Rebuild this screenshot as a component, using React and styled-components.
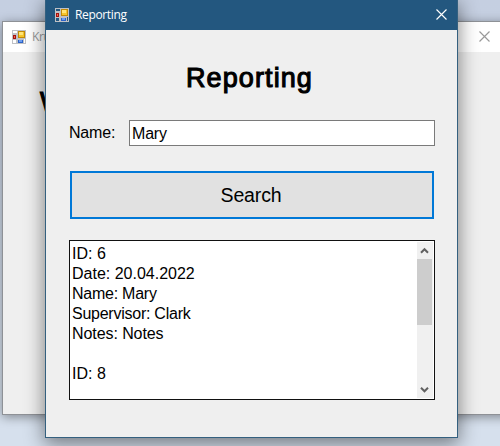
import React from "react";
import styled, { createGlobalStyle } from "styled-components";

const GlobalStyle = createGlobalStyle`
  * { box-sizing: border-box; }
  body { margin: 0; overflow: hidden; background: #d6e0ed; }
`;

const Desktop = styled.main`
  position: relative;
  width: 500px;
  height: 446px;
  overflow: hidden;
  background: linear-gradient(#c5cfe1 0, #c5d0e1 60px, #d6e0ed 380px);
  font-family: "Liberation Sans", Arial, sans-serif;
  color: #000;
`;

const Window = styled.section`
  position: absolute;
  left: ${(p) => p.$x}px;
  top: ${(p) => p.$y}px;
  width: ${(p) => p.$w}px;
  height: ${(p) => p.$h}px;
  display: flex;
  flex-direction: column;
  background: #efefef;
  border: 1px solid ${(p) => (p.$active ? "#34607f" : "#8e9196")};
  box-shadow: ${(p) =>
    p.$active
      ? "0 5px 18px 1px rgba(0,0,0,.46)"
      : "0 2px 10px rgba(0,0,0,.4)"};
`;

const TitleBar = styled.header`
  display: flex;
  flex: none;
  align-items: center;
  height: 30px;
  padding: 0 ${(p) => (p.$active ? 10 : 21)}px 0 9px;
  background: ${(p) => (p.$active ? "#23577f" : "#fff")};
  color: ${(p) => (p.$active ? "#fff" : "#999")};
`;

const Caption = styled.span`
  flex: 1;
  margin-left: 6px;
  font: 12px/16px "Open Sans", "Noto Sans", sans-serif;
  letter-spacing: -0.35px;
  white-space: nowrap;
`;

const Icon = styled.svg`
  display: block;
  flex: none;
`;

const CloseGlyph = styled(Icon)`
  margin-bottom: 1px;
`;

const Form = styled.div`
  display: flex;
  flex-direction: column;
  padding: 32px 22px 0 23px;
`;

const Heading = styled.h1`
  margin: 0;
  padding-right: 5px;
  height: 32px;
  font-size: 27px;
  line-height: 32px;
  font-weight: 400;
  text-align: center;
  letter-spacing: 1.1px;
  -webkit-text-stroke: 1.1px #000;
`;

const BackHeading = styled.h1`
  margin: 34px 0 0 37px;
  font-size: 27px;
  line-height: 32px;
  font-weight: 400;
  -webkit-text-stroke: 1.2px #000;
`;

const Field = styled.label`
  display: flex;
  height: 26px;
  margin-top: 26px;
  font-size: 16px;
  line-height: 25px;
  letter-spacing: -0.2px;
`;

const FieldName = styled.span`
  width: 60px;
`;

const Input = styled.input`
  flex: 1;
  min-width: 0;
  height: 26px;
  padding: 1px 2px 0;
  border: 1px solid #7a7a7a;
  border-radius: 0;
  outline: 0;
  background: #fff;
  color: #000;
  font: 16px "Liberation Sans", Arial, sans-serif;
  letter-spacing: -0.2px;
`;

const Button = styled.button`
  height: 48px;
  margin: 25px 1px 0;
  padding: 1px 2px 0 0;
  border: 2px solid #0078d7;
  border-radius: 0;
  background: #e1e1e1;
  color: #000;
  font: 19.5px "Liberation Sans", Arial, sans-serif;
  letter-spacing: -0.15px;
`;

const ResultBox = styled.div`
  display: flex;
  justify-content: space-between;
  height: 160px;
  margin-top: 21px;
  padding: 1px 1px 1px 2px;
  border: 1px solid #111;
  background: #fff;
`;

const Results = styled.div`
  padding-top: 2px;
  font-size: 16px;
  line-height: 20px;
`;

const Line = styled.div`
  height: 20px;
  white-space: pre;
  letter-spacing: ${(p) => p.$tracking || 0}px;
`;

const ScrollBar = styled.div`
  display: flex;
  flex-direction: column;
  width: 16px;
  background: #f0f0f0;
`;

const Thumb = styled.div`
  width: 15px;
  height: 66px;
  margin-bottom: auto;
  background: #cdcdcd;
`;

const AppIcon = () => (
  <Icon width="14" height="14" viewBox="0 0 14 14" shapeRendering="crispEdges">
    <path
      d="M0 0h14v14H0zM1 1v2h4V1zM1 10v3h3v-3zM12 9v4h1V9z"
      fill="#bfc1c5"
      fillRule="evenodd"
    />
    <path d="M1 5h3v4H1z" fill="#a5120f" />
    <path d="M2 6h1v2H2z" fill="#f06a50" />
    <path d="M6 1h7v7H6z" fill="#c48a05" />
    <path d="M7 2h5v5H7z" fill="#f5c52c" />
    <path d="M7 2h4v3H7z" fill="#ffe477" />
    <path d="M6 10h5v3H6z" fill="#2c63c9" />
    <path d="M7 10h3v2H7z" fill="#6b9df0" />
  </Icon>
);

const CloseIcon = () => (
  <CloseGlyph width="11" height="11" viewBox="0 0 11 11" fill="none" stroke="currentColor" strokeWidth="1.15">
    <path d="M.5.5l10 10M10.5.5l-10 10" />
  </CloseGlyph>
);

const Arrow = ({ down }) => (
  <Icon width="16" height="17" viewBox="0 0 16 17" fill="none" stroke="#606060" strokeWidth="2">
    <path d={down ? "M4 6.8L7.5 10.3L11 6.8" : "M4 10.7L7.5 7.2L11 10.7"} />
  </Icon>
);

const lines = [
  { text: "ID: 6" },
  { text: "Date: 20.04.2022" },
  { text: "Name: Mary", tracking: -0.25 },
  { text: "Supervisor: Clark", tracking: -0.25 },
  { text: "Notes: Notes", tracking: -0.08 },
  { text: "" },
  { text: "ID: 8" },
];

export default function App() {
  return (
    <Desktop>
      <GlobalStyle />
      <Window $x={2} $y={21} $w={510} $h={394}>
        <TitleBar>
          <AppIcon />
          <Caption>Kru</Caption>
          <CloseIcon />
        </TitleBar>
        <BackHeading>W</BackHeading>
      </Window>
      <Window $active $x={45} $y={-1} $w={413} $h={439}>
        <TitleBar $active>
          <AppIcon />
          <Caption>Reporting</Caption>
          <CloseIcon />
        </TitleBar>
        <Form>
          <Heading>Reporting</Heading>
          <Field>
            <FieldName>Name:</FieldName>
            <Input defaultValue="Mary" spellCheck={false} />
          </Field>
          <Button type="button">Search</Button>
          <ResultBox>
            <Results>
              {lines.map((l, i) => (
                <Line key={i} $tracking={l.tracking}>{l.text}</Line>
              ))}
            </Results>
            <ScrollBar>
              <Arrow />
              <Thumb />
              <Arrow down />
            </ScrollBar>
          </ResultBox>
        </Form>
      </Window>
    </Desktop>
  );
}
